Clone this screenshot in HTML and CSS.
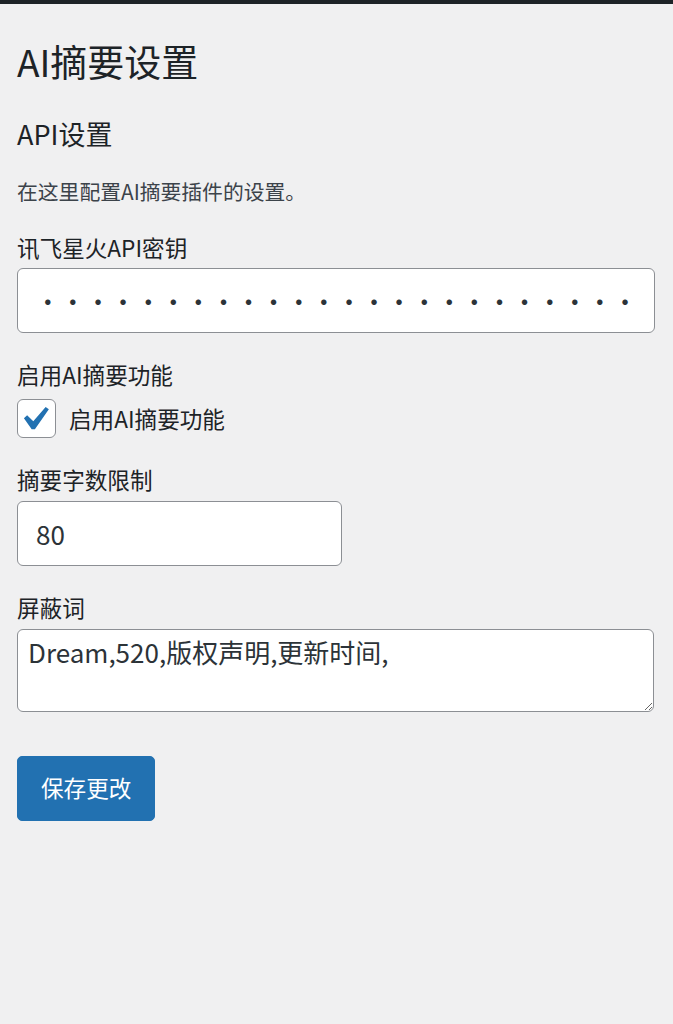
FILE: index.html
```html
<!DOCTYPE html>
<html lang="zh-CN">
<head>
<meta charset="utf-8">
<title>AI摘要设置</title>
<link rel="stylesheet" href="styles.css">
</head>
<body>
<div class="topbar"></div>
<div class="wrap">
  <h1 class="title">AI摘要设置</h1>
  <form class="settings">
    <h2 class="section-title">API设置</h2>
    <p class="desc">在这里配置AI摘要插件的设置。</p>

    <div class="field">
      <label class="field-label" for="apikey">讯飞星火API密钥</label>
      <input id="apikey" class="text-input wide password" type="password" value="xxxxxxxxxxxxxxxxxxxxxxxx">
    </div>

    <div class="field">
      <span class="field-label">启用AI摘要功能</span>
      <label class="check-row">
        <span class="checkbox">
          <svg viewBox="2.9 1.6 16.25 16.25" width="39" height="39" aria-hidden="true"><path d="M14.83 4.89l1.34.94-5.81 8.38H9.02L5.78 9.67l1.34-1.25 2.57 2.4z" fill="#2271b1"/></svg>
        </span>
        <span class="check-text">启用AI摘要功能</span>
      </label>
    </div>

    <div class="field">
      <label class="field-label" for="limit">摘要字数限制</label>
      <input id="limit" class="text-input short" type="number" value="80">
    </div>

    <div class="field">
      <label class="field-label" for="words">屏蔽词</label>
      <textarea id="words" class="text-area">Dream,520,版权声明,更新时间,</textarea>
    </div>

    <div class="actions">
      <button type="button" class="button-primary">保存更改</button>
    </div>
  </form>
</div>
</body>
</html>
```

FILE: styles.css
```css
* { box-sizing: border-box; }

html, body {
  margin: 0;
  padding: 0;
  background: #f0f0f1;
}

body {
  font-family: "Noto Sans CJK SC", "Noto Sans", sans-serif;
  color: #1d2327;
  width: 673px;
  min-height: 1024px;
}

.topbar {
  height: 4px;
  background: #1d2327;
}

.wrap {
  padding: 0 18px 0 17px;
}

.title {
  margin: 33px 0 0;
  font-size: 37px;
  line-height: 48px;
  font-weight: 400;
  color: #1d2327;
}

.settings {
  display: flex;
  flex-direction: column;
}

.section-title {
  margin: 31px 0 0;
  font-size: 27px;
  line-height: 36px;
  font-weight: 400;
  color: #1d2327;
}

.desc {
  margin: 24px 0 0;
  font-size: 20.8px;
  line-height: 30px;
  color: #3c434a;
}

.field {
  display: flex;
  flex-direction: column;
  align-items: flex-start;
  margin-top: 27px;
}

.field-label {
  font-size: 22.6px;
  line-height: 30px;
  color: #1d2327;
}

.text-input {
  margin-top: 5px;
  height: 65px;
  border: 1px solid #8c8f94;
  border-radius: 6px;
  background: #fff;
  font-family: "Noto Sans CJK SC", "Noto Sans", sans-serif;
  font-size: 26px;
  color: #2c3338;
  padding: 0 18px;
  outline: none;
}

.wide { width: 638px; }

.password {
  font-size: 25.6px;
  padding-left: 17px;
  letter-spacing: -0.5px;
  color: #2c3338;
}

.short {
  width: 325px;
  margin-top: 6px;
  -moz-appearance: textfield;
  appearance: textfield;
}
.short::-webkit-inner-spin-button,
.short::-webkit-outer-spin-button {
  -webkit-appearance: none;
  margin: 0;
}

.check-row {
  display: flex;
  align-items: center;
  gap: 13px;
  margin-top: 9px;
}

.checkbox {
  display: block;
  width: 39px;
  height: 39px;
  border: 1px solid #8c8f94;
  border-radius: 6px;
  background: #fff;
  overflow: hidden;
}
.checkbox svg {
  display: block;
  margin: -1px;
}

.check-text {
  font-size: 22.6px;
  line-height: 30px;
  color: #1d2327;
}

.text-area {
  margin-top: 6px;
  width: 637px;
  height: 83px;
  border: 1px solid #8c8f94;
  border-radius: 6px;
  background: #fff;
  font-family: "Noto Sans CJK SC", "Noto Sans", sans-serif;
  font-size: 26px;
  line-height: 36px;
  color: #2c3338;
  padding: 4px 10px;
  outline: none;
}

.actions {
  margin-top: 44px;
}

.button-primary {
  height: 65px;
  padding: 0 23px;
  border: 1px solid #2271b1;
  border-radius: 5px;
  background: #2271b1;
  color: #fff;
  font-family: "Noto Sans CJK SC", "Noto Sans", sans-serif;
  font-size: 22.6px;
  line-height: 1;
  cursor: pointer;
}
```
